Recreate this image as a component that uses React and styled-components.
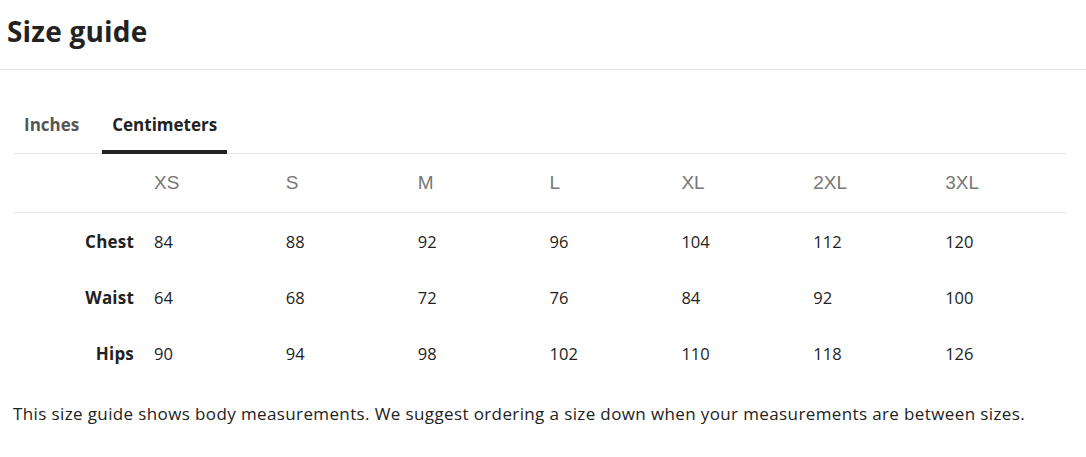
import React, { useState } from "react";
import styled, { createGlobalStyle } from "styled-components";

const Global = createGlobalStyle`
  html, body { margin: 0; padding: 0; background: #fff; }
  body { font-family: "Open Sans", "Noto Sans", sans-serif; color: #222; }
`;

const Header = styled.header`
  height: 70px;
  border-bottom: 1px solid #e6e6e6;
  display: flex;
  align-items: flex-start;
  padding: 12px 7px 0;
  box-sizing: border-box;
`;

const Title = styled.h1`
  margin: 0;
  font-size: 28px;
  line-height: 38px;
  font-weight: 700;
  letter-spacing: 0.2px;
  color: #222;
`;

const Content = styled.main`
  padding: 32px 19px 0 13px;
`;

const TabList = styled.div`
  display: flex;
  gap: 13px;
  border-bottom: 1px solid #e6e6e6;
  padding-left: 1px;
`;

const Tab = styled.button`
  all: unset;
  cursor: pointer;
  font-family: "Open Sans", "Noto Sans", sans-serif;
  font-size: 17px;
  font-weight: 700;
  padding: 12px 10px 14px;
  color: ${(p) => (p.$active ? "#222" : "#555")};
  border-bottom: 4px solid ${(p) => (p.$active ? "#222" : "transparent")};
  margin-bottom: -1px;
  line-height: 22px;
`;

const Table = styled.div`
  display: grid;
  grid-template-columns: 131px repeat(7, 1fr);
`;

const HeadCell = styled.div`
  height: 59px;
  display: flex;
  align-items: center;
  padding-left: 10px;
  border-bottom: 1px solid #e6e6e6;
  font-family: "Liberation Sans", Arial, sans-serif;
  font-size: 19px;
  color: #777;
  box-sizing: border-box;
`;

const RowLabel = styled.div`
  height: 56px;
  display: flex;
  align-items: center;
  justify-content: flex-end;
  padding-right: 10px;
  font-size: 17px;
  font-weight: 700;
  letter-spacing: 0.2px;
  color: #222;
`;

const Cell = styled.div`
  height: 56px;
  display: flex;
  align-items: center;
  padding-left: 10px;
  font-size: 16.5px;
  color: #222;
`;

const Note = styled.p`
  margin: 21px 0 0;
  font-size: 17px;
  letter-spacing: 0.38px;
  color: #222;
`;

const sizes = ["XS", "S", "M", "L", "XL", "2XL", "3XL"];
const data = {
  cm: [
    ["Chest", [84, 88, 92, 96, 104, 112, 120]],
    ["Waist", [64, 68, 72, 76, 84, 92, 100]],
    ["Hips", [90, 94, 98, 102, 110, 118, 126]],
  ],
  in: [
    ["Chest", [33, 34.5, 36, 38, 41, 44, 47]],
    ["Waist", [25, 27, 28, 30, 33, 36, 39]],
    ["Hips", [35.5, 37, 38.5, 40, 43, 46.5, 49.5]],
  ],
};

export default function App() {
  const [unit, setUnit] = useState("cm");
  return (
    <>
      <Global />
      <Header>
        <Title>Size guide</Title>
      </Header>
      <Content>
        <TabList>
          <Tab $active={unit === "in"} onClick={() => setUnit("in")}>Inches</Tab>
          <Tab $active={unit === "cm"} onClick={() => setUnit("cm")}>Centimeters</Tab>
        </TabList>
        <Table>
          <HeadCell />
          {sizes.map((s) => (
            <HeadCell key={s}>{s}</HeadCell>
          ))}
          {data[unit].map(([label, vals]) => (
            <React.Fragment key={label}>
              <RowLabel>{label}</RowLabel>
              {vals.map((v, i) => (
                <Cell key={i}>{v}</Cell>
              ))}
            </React.Fragment>
          ))}
        </Table>
        <Note>
          This size guide shows body measurements. We suggest ordering a size down when your measurements are between sizes.
        </Note>
      </Content>
    </>
  );
}
